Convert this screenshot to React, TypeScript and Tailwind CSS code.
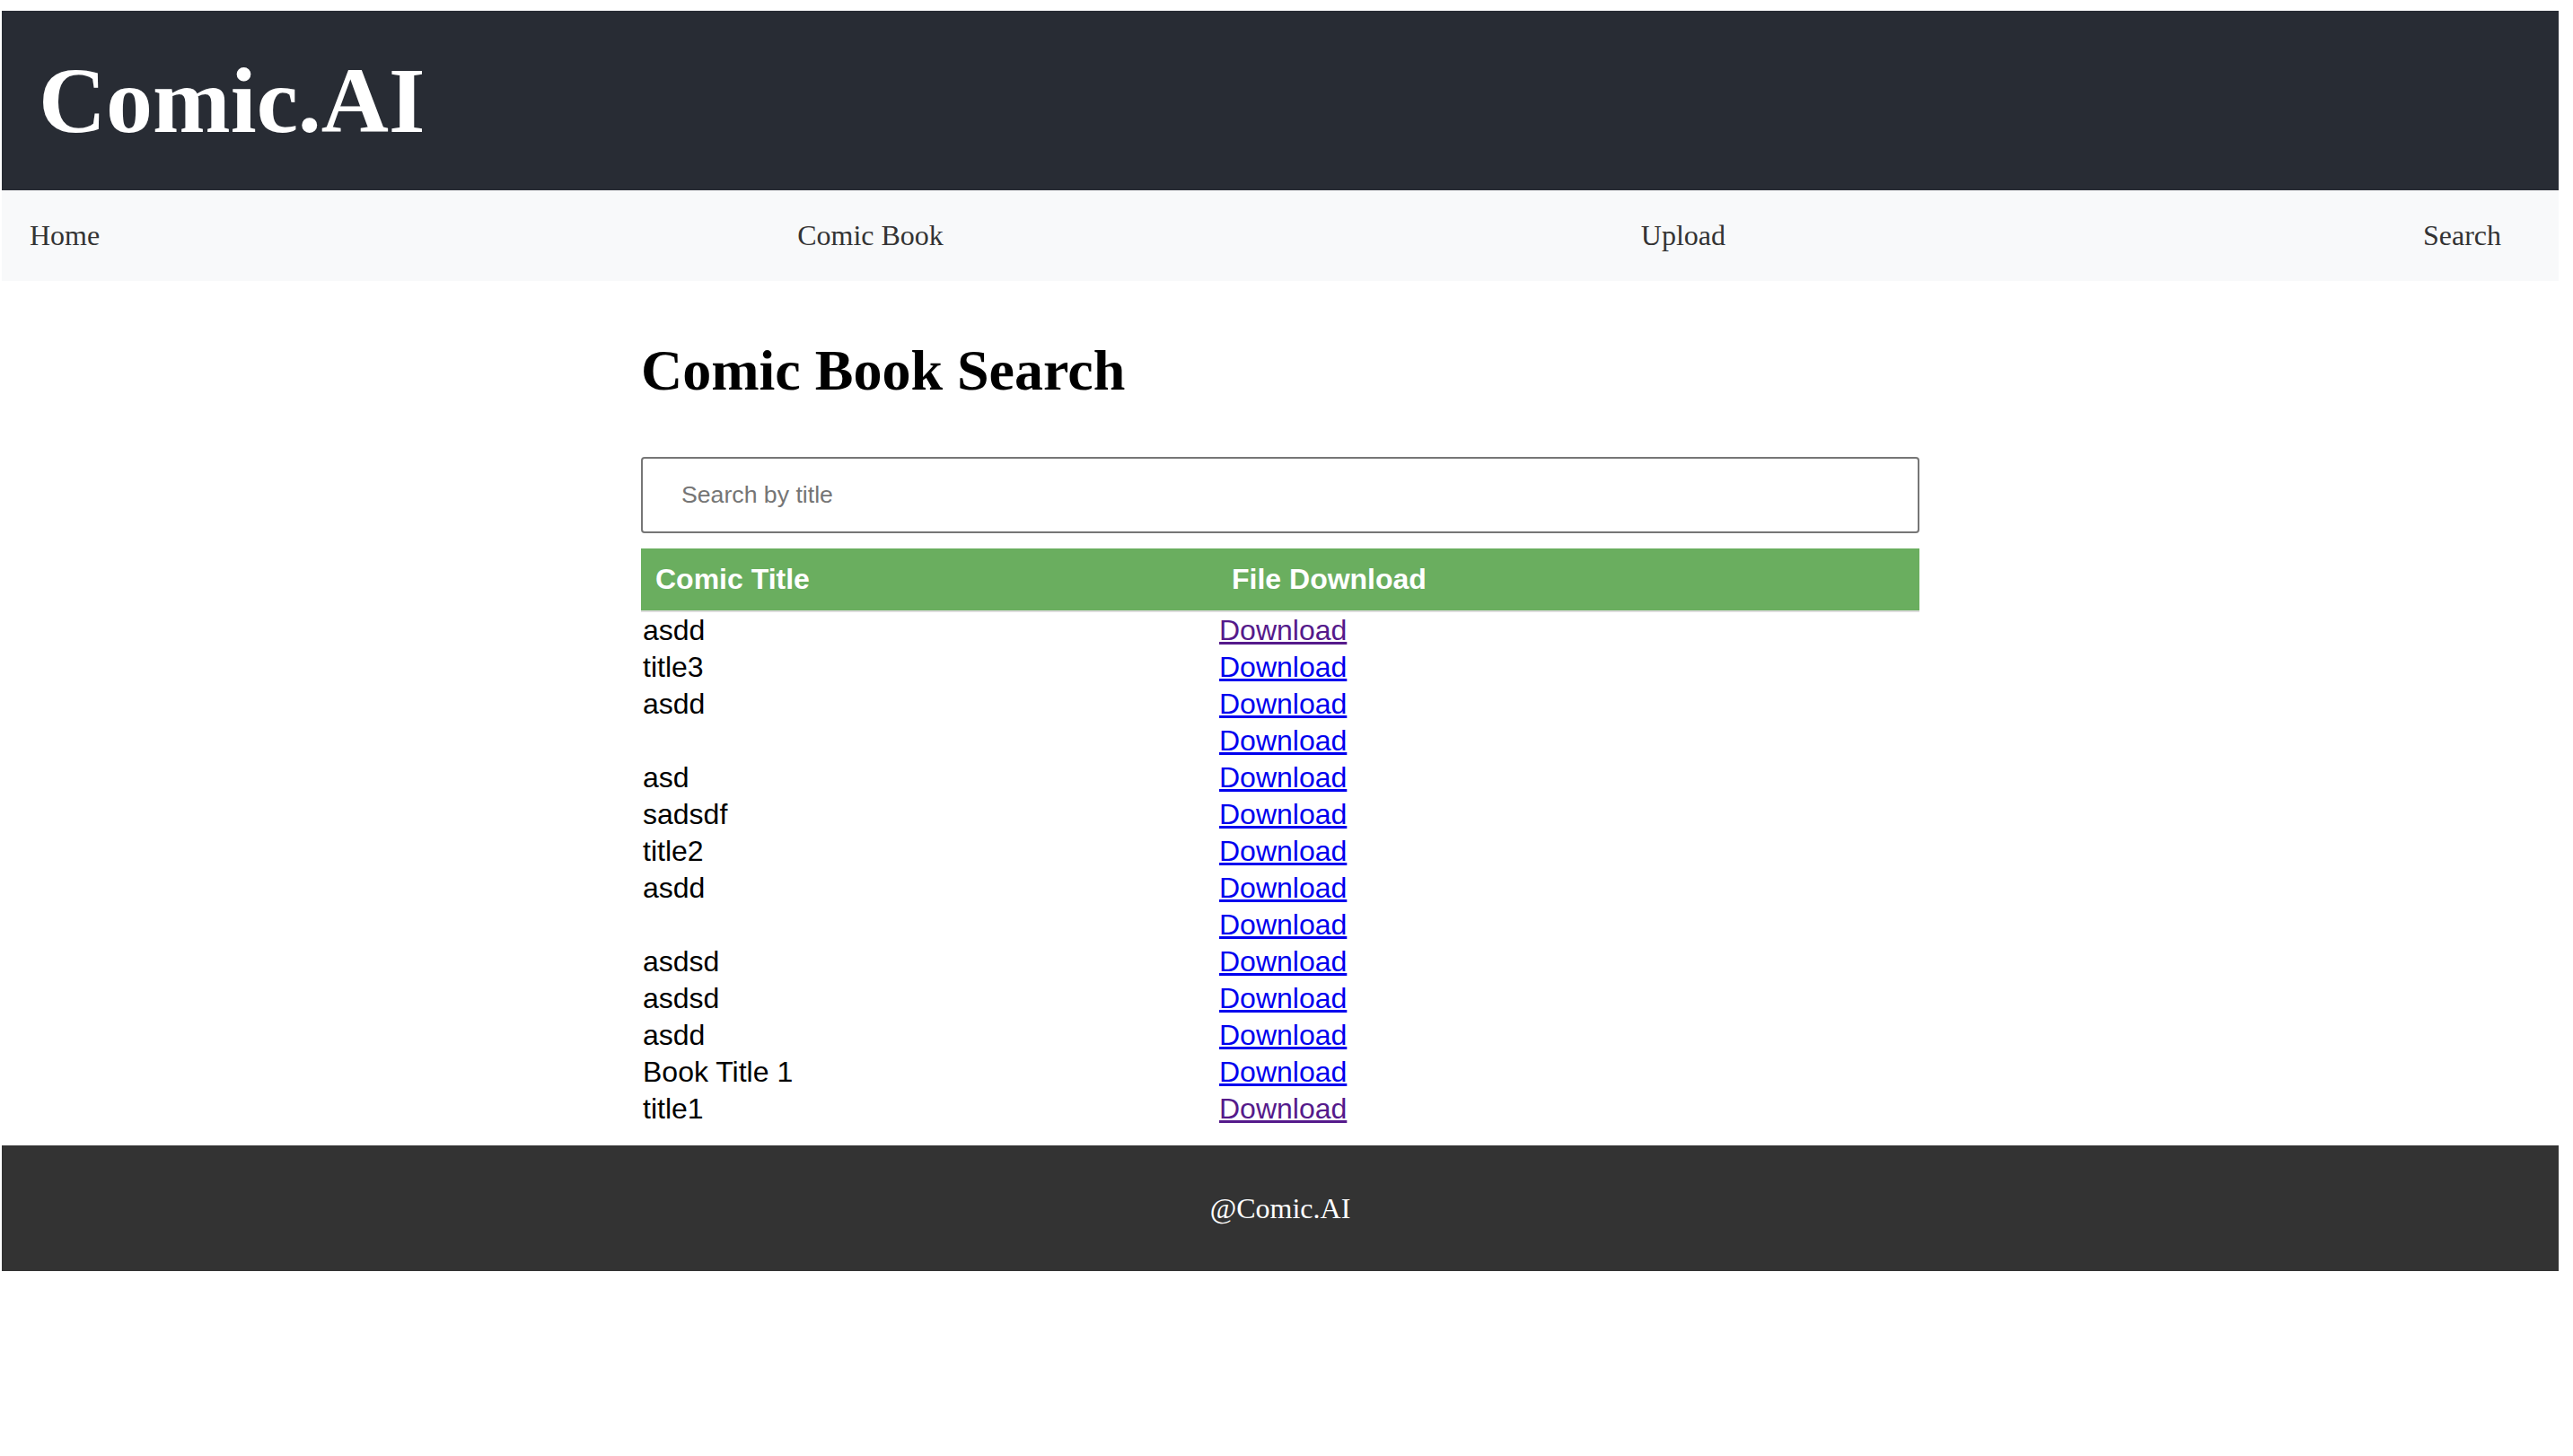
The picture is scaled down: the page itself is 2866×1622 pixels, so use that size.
const comics = [
  { title: "asdd", visited: true },
  { title: "title3" },
  { title: "asdd" },
  { title: "" },
  { title: "asd" },
  { title: "sadsdf" },
  { title: "title2" },
  { title: "asdd" },
  { title: "" },
  { title: "asdsd" },
  { title: "asdsd" },
  { title: "asdd" },
  { title: "Book Title 1" },
  { title: "title1", visited: true },
];

const navLinks = ["Home", "Comic Book", "Upload", "Search"];

export default function App() {
  return (
    <div className="min-h-screen bg-white pt-[12px] pl-[2px] pr-[16px]">
      <header className="h-[200px] bg-[#282c34] flex items-center pl-[41px]">
        <h1 className="font-['Liberation_Serif',serif] font-bold text-[104px] leading-[1.15] text-white">
          Comic.AI
        </h1>
      </header>

      <nav className="h-[101px] bg-[#f8f9fa] flex items-center justify-between pl-[31px] pr-[64px]">
        {navLinks.map((link) => (
          <a
            key={link}
            href="#"
            className="font-['Liberation_Serif',serif] text-[32px] leading-[37px] text-[#333]"
          >
            {link}
          </a>
        ))}
      </nav>

      <main className="w-1/2 mx-auto pb-[20px] font-['Liberation_Sans',Arial,sans-serif]">
        <h2 className="mt-[63px] font-['Liberation_Serif',serif] font-bold text-[64px] leading-[74px] text-black">
          Comic Book Search
        </h2>
        <input
          type="text"
          placeholder="Search by title"
          className="mt-[59px] block w-full h-[85px] border-2 border-[#767676] rounded-[4px] pl-[43px] text-[26.67px] font-['Liberation_Sans',Arial,sans-serif] placeholder:text-[#757575] outline-none"
        />
        <table className="mt-[17px] w-full border-collapse text-[32px] leading-[37px]">
          <thead>
            <tr className="bg-[#6aae5f]">
              <th className="w-[642px] text-left font-bold text-white p-[16px] border-b-2 border-[#dddddd]">
                Comic Title
              </th>
              <th className="text-left font-bold text-white p-[16px] border-b-2 border-[#dddddd]">
                File Download
              </th>
            </tr>
          </thead>
          <tbody>
            {comics.map((comic, index) => (
              <tr key={index}>
                <td className="p-[2px] text-black h-[41px]">{comic.title}</td>
                <td className="p-[2px] h-[41px]">
                  <a
                    href="#"
                    className={
                      comic.visited
                        ? "underline text-[#551a8b]"
                        : "underline text-[#0000ee]"
                    }
                  >
                    Download
                  </a>
                </td>
              </tr>
            ))}
          </tbody>
        </table>
      </main>

      <footer className="h-[140px] bg-[#333333] flex items-center justify-center">
        <p className="font-['Liberation_Serif',serif] text-[32px] leading-[37px] text-white">
          @Comic.AI
        </p>
      </footer>
    </div>
  );
}
